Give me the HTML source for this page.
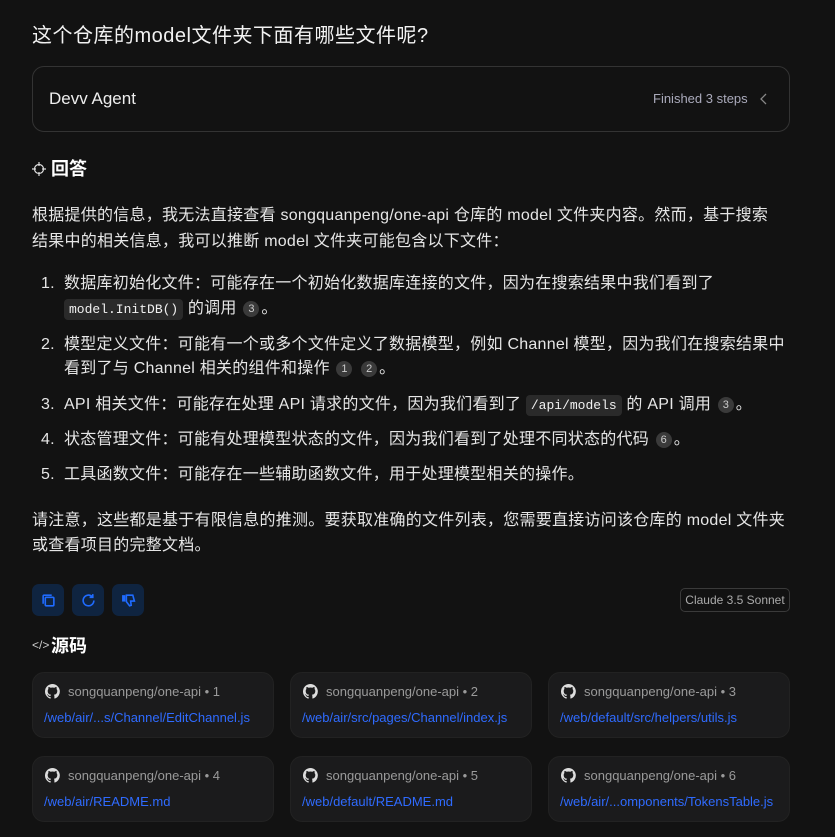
<!DOCTYPE html>
<html><head><meta charset="utf-8"><style>
*{margin:0;padding:0;box-sizing:border-box}
body{width:835px;height:837px;background:#121212;color:#e6e6e6;font-family:"Liberation Sans","Noto Sans CJK SC",sans-serif;position:relative;overflow:hidden}
.a{position:absolute;white-space:nowrap}
.t{font-size:16px;line-height:24px;letter-spacing:0.25px}
code{font-family:"Liberation Mono","DejaVu Sans Mono",monospace;font-size:13px;background:#2a2a2a;border-radius:4px;padding:3px 5px;color:#f0f0f0;letter-spacing:0}
.n{display:inline-block;width:16px;height:16px;border-radius:50%;background:#3a3a3a;color:#ccc;font-size:11px;line-height:16px;text-align:center;vertical-align:1px;margin:0 2px;letter-spacing:0}
.card{position:absolute;width:242px;height:66px;background:#1b1b1c;border:1px solid #222;border-radius:12px}
.card .r{position:absolute;left:12px;top:11px;font-size:13px;color:#9a9a9a;display:flex;align-items:center;gap:8px}
.card .l{position:absolute;left:11px;top:37px;font-size:13px;color:#2f6bff}
.btn{position:absolute;top:584px;width:32px;height:32px;border-radius:7px;background:#0f2440;display:flex;align-items:center;justify-content:center}
</style></head><body>
<div class="a" style="left:32px;top:22px;font-size:20px;line-height:28px;color:#f2f2f2;letter-spacing:0.5px">这个仓库的model文件夹下面有哪些文件呢?</div>
<div class="a" style="left:32px;top:66px;width:758px;height:66px;border:1px solid #333;border-radius:12px"></div>
<div class="a" style="left:49px;top:88px;font-size:17px;line-height:22px;color:#eee">Devv Agent</div>
<div class="a" style="left:653px;top:90px;font-size:13px;line-height:18px;color:#aab">Finished 3 steps</div>
<svg class="a" style="left:759px;top:92px" width="10" height="14" viewBox="0 0 10 14"><path d="M7 2L2 7l5 5" stroke="#888" stroke-width="1.3" fill="none"/></svg>
<svg class="a" style="left:32px;top:162px" width="14" height="14" viewBox="0 0 14 14" fill="none" stroke="#ddd" stroke-width="1.2"><circle cx="7" cy="7" r="4.5"/><path d="M7 0v4M7 10v4M0 7h4M10 7h4"/></svg>
<div class="a" style="left:51px;top:157px;font-size:18px;line-height:24px;font-weight:bold;color:#fff">回答</div>
<div class="a t" style="left:32px;top:204px">根据提供的信息，我无法直接查看 songquanpeng/one-api 仓库的 model 文件夹内容。然而，基于搜索</div>
<div class="a t" style="left:32px;top:230px">结果中的相关信息，我可以推断 model 文件夹可能包含以下文件：</div>
<div class="a t" style="left:41px;top:272px">1.</div>
<div class="a t" style="left:64px;top:272px">数据库初始化文件：可能存在一个初始化数据库连接的文件，因为在搜索结果中我们看到了</div>
<div class="a t" style="left:64px;top:297px"><code>model.InitDB()</code> 的调用 <span class="n">3</span>。</div>
<div class="a t" style="left:41px;top:333px">2.</div>
<div class="a t" style="left:64px;top:333px">模型定义文件：可能有一个或多个文件定义了数据模型，例如 Channel 模型，因为我们在搜索结果中</div>
<div class="a t" style="left:64px;top:357px">看到了与 Channel 相关的组件和操作 <span class="n">1</span> <span class="n">2</span>。</div>
<div class="a t" style="left:41px;top:393px">3.</div>
<div class="a t" style="left:64px;top:393px">API 相关文件：可能存在处理 API 请求的文件，因为我们看到了 <code>/api/models</code> 的 API 调用 <span class="n">3</span>。</div>
<div class="a t" style="left:41px;top:428px">4.</div>
<div class="a t" style="left:64px;top:428px">状态管理文件：可能有处理模型状态的文件，因为我们看到了处理不同状态的代码 <span class="n">6</span>。</div>
<div class="a t" style="left:41px;top:463px">5.</div>
<div class="a t" style="left:64px;top:463px">工具函数文件：可能存在一些辅助函数文件，用于处理模型相关的操作。</div>
<div class="a t" style="left:32px;top:509px">请注意，这些都是基于有限信息的推测。要获取准确的文件列表，您需要直接访问该仓库的 model 文件夹</div>
<div class="a t" style="left:32px;top:534px">或查看项目的完整文档。</div>
<div class="btn" style="left:32px"><svg width="15" height="15" viewBox="0 0 14 14" fill="none" stroke="#1f6bff" stroke-width="1.5"><rect x="4" y="4" width="8" height="8" rx="1"/><path d="M2 10V3a1 1 0 011-1h7"/></svg></div>
<div class="btn" style="left:72px"><svg width="15" height="15" viewBox="0 0 14 14" fill="none" stroke="#1f6bff" stroke-width="1.5"><path d="M12 7a5 5 0 11-1.5-3.6M11 1v3H8"/></svg></div>
<div class="btn" style="left:112px"><svg width="15" height="15" viewBox="0 0 14 14" fill="#1f6bff"><rect x="1" y="2" width="3" height="6"/><path d="M5 2h6l1.5 5.5H9l.5 4-1.5.5L5 8z" fill="none" stroke="#1f6bff" stroke-width="1.5"/></svg></div>
<div class="a" style="left:680px;top:588px;width:110px;height:24px;border:1px solid #3a3a3a;border-radius:5px;font-size:12px;line-height:22px;text-align:center;color:#aaa">Claude 3.5 Sonnet</div>
<div class="a" style="left:32px;top:638px;font-size:12px;color:#ccc">&lt;/&gt;</div>
<div class="a" style="left:51px;top:634px;font-size:18px;line-height:24px;font-weight:bold;color:#fff">源码</div>
<svg width="0" height="0" style="position:absolute"><defs><symbol id="gh" viewBox="0 0 16 16"><path fill="#ddd" d="M8 0a8 8 0 00-2.5 15.6c.4 0 .5-.2.5-.4v-1.5c-2.2.5-2.7-1-2.7-1-.4-.9-.9-1.2-.9-1.2-.7-.5.1-.5.1-.5.8.1 1.2.8 1.2.8.7 1.3 1.9.9 2.3.7.1-.5.3-.9.5-1.1-1.8-.2-3.6-.9-3.6-4 0-.9.3-1.6.8-2.1-.1-.2-.4-1 .1-2.1 0 0 .7-.2 2.2.8a7.5 7.5 0 014 0c1.5-1 2.2-.8 2.2-.8.4 1.1.2 1.9.1 2.1.5.6.8 1.3.8 2.1 0 3.1-1.9 3.8-3.6 4 .3.3.5.8.5 1.5v2.2c0 .2.1.5.6.4A8 8 0 008 0z"/></symbol></defs></svg>
<div class="card" style="left:32px;top:672px"><div class="r"><svg width="15" height="15"><use href="#gh"/></svg>songquanpeng/one-api • 1</div><div class="l">/web/air/...s/Channel/EditChannel.js</div></div>
<div class="card" style="left:290px;top:672px"><div class="r"><svg width="15" height="15"><use href="#gh"/></svg>songquanpeng/one-api • 2</div><div class="l">/web/air/src/pages/Channel/index.js</div></div>
<div class="card" style="left:548px;top:672px"><div class="r"><svg width="15" height="15"><use href="#gh"/></svg>songquanpeng/one-api • 3</div><div class="l">/web/default/src/helpers/utils.js</div></div>
<div class="card" style="left:32px;top:756px"><div class="r"><svg width="15" height="15"><use href="#gh"/></svg>songquanpeng/one-api • 4</div><div class="l">/web/air/README.md</div></div>
<div class="card" style="left:290px;top:756px"><div class="r"><svg width="15" height="15"><use href="#gh"/></svg>songquanpeng/one-api • 5</div><div class="l">/web/default/README.md</div></div>
<div class="card" style="left:548px;top:756px"><div class="r"><svg width="15" height="15"><use href="#gh"/></svg>songquanpeng/one-api • 6</div><div class="l">/web/air/...omponents/TokensTable.js</div></div>
</body></html>
